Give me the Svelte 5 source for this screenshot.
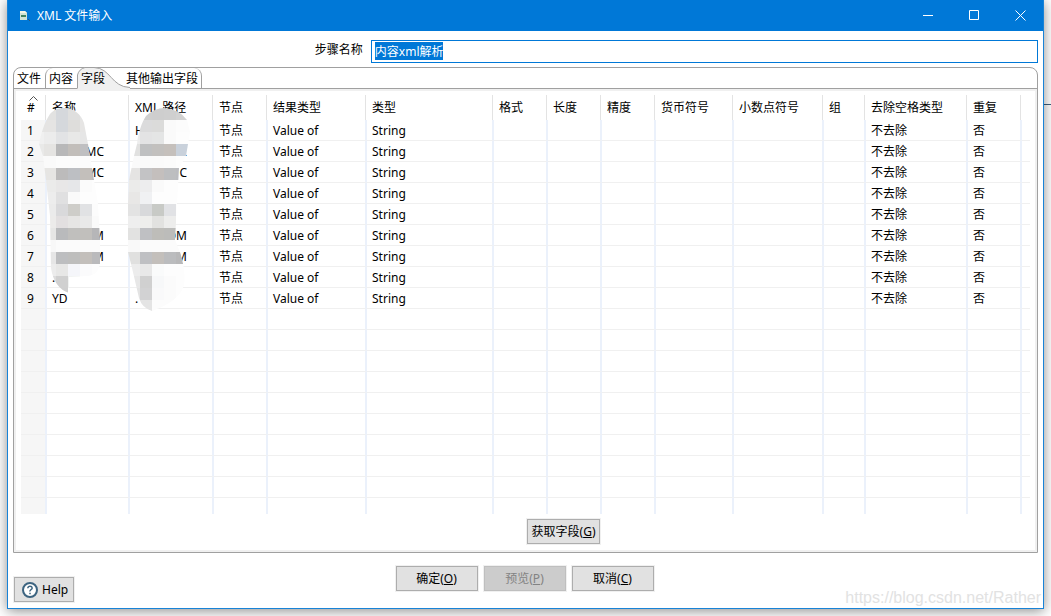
<script lang="ts">
  import { onMount } from 'svelte';

  interface Field {
    name?: string;
    nameTail?: string;
    path?: string;
    pathTail?: string;
  }

  interface Mosaic {
    id: string;
    x: number;
    outline: string;
    rows: string[];
  }

  const tabs = ['文件', '内容', '字段', '其他输出字段'];
  let activeTab = $state(2);

  let stepName = $state('内容xml解析');
  let nameInput: HTMLInputElement;

  const columns = [
    { label: '#', width: 26 },
    { label: '名称', width: 83 },
    { label: 'XML 路径', width: 84 },
    { label: '节点', width: 54 },
    { label: '结果类型', width: 99 },
    { label: '类型', width: 127 },
    { label: '格式', width: 54 },
    { label: '长度', width: 54 },
    { label: '精度', width: 54 },
    { label: '货币符号', width: 78 },
    { label: '小数点符号', width: 90 },
    { label: '组', width: 42 },
    { label: '去除空格类型', width: 102 },
    { label: '重复', width: 54 },
  ];

  const fields: Field[] = [
    { path: 'H' },
    { nameTail: 'MC', pathTail: 'C' },
    { nameTail: 'MC', pathTail: 'C' },
    {},
    {},
    { nameTail: 'M', pathTail: 'OM' },
    { nameTail: 'M', pathTail: 'OM' },
    { name: '.' },
    { name: 'YD', path: '.' },
  ];

  const emptyRows = Array.from({ length: 10 }, (_, i) => i);
  const emptyCells = Array.from({ length: 13 }, (_, i) => i);

  // Censored areas: 12px tiles, one string of colours per tile row.
  const mosaics: Mosaic[] = [
    {
      id: 'censor-name',
      x: -1,
      outline:
        'M19 49 C21 39 24 28 30 19 C36 12 44 13 46 13 C54 14 61 19 64 28 L68 49 L74 85 L78 109 L80 145 L80 169 Q78 180 68 181 L49 182 V198 Q34 193 31 173 L30 121 L26 85 L23 61 Z',
      rows: [
        '#e4e4e3 #e2e2e1 #e2e2e1 #d5d8dc #dfdfde #e4e4e4 #e4e4e4',
        '#e6e6e5 #e5e5e4 #e5e4e3 #d5d8dc #dedddb #e6e5e4 #e4e5e6',
        '#f2f2f2 #f0f0f0 #ececec #e2e3e5 #e8e8e7 #e6e6e6 #fafafa',
        '#eeeeed #e9e9e8 #e5e4e2 #b8b8b9 #c2beba #bfbfc1 #b7b8bb',
        '#fafafa #fafafa #fafafa #fcfcfc #fcfcfc #fcfcfc #fcfcfc',
        '#f2f2f2 #eeeeed #e6e5e3 #bcbbbb #bdbfc3 #c3bfbb #b9bbc0',
        '#f0f0f0 #eeeeee #ebebea #e8e7e7 #e6e7e9 #fbfbfb #fdfdfd',
        '#f2f2f2 #eeeeee #ededed #e0e0e1 #fafafa #fdfdfd #fdfdfd',
        '#f2f2f2 #eeeeee #ebebeb #d9d9db #cecdc9 #e1e2e4 #fcfcfc',
        '#f2f2f2 #eeeeee #ecebea #e2dfe0 #e6e5e4 #e9e9e9 #fafafa',
        '#f2f2f2 #eeeeee #e6e6e5 #b9babc #c0bfbd #c1bfbc #b6b6b8',
        '#f8f8f8 #f8f8f8 #f8f8f8 #fbfbfb #fbfbfb #fbfbfb #fbfbfb',
        '#f2f2f2 #eeeeee #e6e6e6 #bdbec0 #bebebd #c3bfbb #bababc',
        '#eeeeee #eeeeee #ececec #e7e7e6 #f5f6fa #fbfbfc #fdfdfd',
        '#e8e8e8 #e0e0e0 #dcdcdc #d0d0d0 #f1f3f2 #fcfcfc #fdfdfd',
        '#d8d8d8 #d6d6d6 #d2d2d2 #cfcfcf #ffffff #ffffff #ffffff',
      ],
    },
    {
      id: 'censor-path',
      x: 83,
      outline:
        'M33 49 C34 38 38 27 42 21 Q51 13 60 13 Q75 14 83 25 L86 37 L82 61 L75 73 L73 109 L71 145 L76 157 Q82 176 80 190 Q76 206 48 216 Q38 213 35 203 L28 173 L24 157 L24 109 L25 85 L30 61 Z',
      rows: [
        '#e0e0e0 #e0e0e0 #d8d8d8 #cfcfcf #cecece #cfcfcf #d2d2d2 #d2d2d2',
        '#eeeeee #eeeeee #e4e4e4 #dbdbdc #dbdbda #fafafa #fcfcfc #fcfcfc',
        '#f2f2f2 #f2f2f2 #ededed #e3e3e4 #e4e5e5 #fafafa #fdfdfd #fdfdfd',
        '#eeeeee #e9e9e9 #e1e1e0 #bfc0c1 #c2c0be #c5c0bc #c9d1db #c9d1db',
        '#fafafa #fafafa #fafafa #fafafa #fafafa #fbfbfb #fdfdfd #fdfdfd',
        '#eeeeee #eeeeee #e5e4e3 #c3c3c5 #c4bfbd #bdbec0 #bbbcc0 #bbbcc0',
        '#f2f2f2 #e8e8e7 #ebebea #ededee #fafafa #fdfdfd #fdfdfd #fdfdfd',
        '#f2f2f2 #e3e3e2 #e8e7e6 #f0f1f3 #fdfdfd #fdfdfd #fdfdfd #fdfdfd',
        '#f2f2f2 #f0f0f0 #e3e3e3 #d8d9db #c8cac6 #e1e2e5 #fdfdfd #fdfdfd',
        '#f2f2f2 #f3f5f5 #eeeeee #eeeeec #e2e2e0 #ededec #fdfdfd #fdfdfd',
        '#f2f2f2 #e5e5e4 #e2e2e1 #bfc0c3 #bebdb9 #bcbcba #bcbcbc #bcbcbc',
        '#f8f8f8 #f6f6f6 #f9f9f9 #fbfbfb #fbfbfb #fbfbfb #fbfbfb #fbfbfb',
        '#f2f2f2 #e3e3e2 #e0e0df #bfc0c3 #c3bfbb #bbbcbe #b8b8b9 #b8b8b9',
        '#eeeeee #ececec #ececec #e8e8e8 #fafbfb #fdfdfd #fdfdfd #fdfdfd',
        '#eeeeee #ececec #e7e7e7 #d0d0d0 #f7f8f9 #fbfbfb #fdfdfd #fdfdfd',
        '#eeeeee #e4e4e4 #e3e3e3 #d2d2d3 #f9f9fa #fbfbfb #fdfdfd #fdfdfd',
        '#eeeeee #e4e4e4 #e2e2e2 #e4e4e4 #fcfcfc #fcfcfc #fcfcfc #fcfcfc',
      ],
    },
  ];

  onMount(() => {
    nameInput.focus();
    nameInput.select();
  });
</script>

<svelte:head>
  <title>XML 文件输入</title>
</svelte:head>

<div class="desktop">
  <div class="window">
    <header class="titlebar">
      <svg class="app-icon" width="12" height="12" viewBox="0 0 12 12" aria-hidden="true">
        <path d="M1 1h5l2 2v7H1z" fill="#cfe3d6" />
        <path d="M1 1h5l2 2H1z" fill="#f4f6e4" />
        <path d="M2 5h5v2H2z" fill="#41835f" />
        <path d="M9 9l2 2" stroke="#24587e" />
      </svg>
      <h1>XML 文件输入</h1>
      <button type="button" class="win-btn" aria-label="最小化">
        <svg width="11" height="11" viewBox="0 0 11 11"><path d="M0 5.500h10" /></svg>
      </button>
      <button type="button" class="win-btn" aria-label="最大化">
        <svg width="11" height="11" viewBox="0 0 11 11"><path d="M.5.5h9v9h-9z" /></svg>
      </button>
      <button type="button" class="win-btn" aria-label="关闭">
        <svg width="11" height="11" viewBox="0 0 11 11"><path d="M.5.5l10 10M10.500.5l-10 10" /></svg>
      </button>
    </header>

    <main>
      <div class="step-row">
        <label for="step-name">步骤名称</label>
        <input id="step-name" type="text" bind:value={stepName} bind:this={nameInput} />
      </div>

      <section class="folder">
        <div class="tabs" role="tablist">
          {#each tabs as tab, i (tab)}
            <button
              type="button"
              role="tab"
              class="tab"
              class:active={i === activeTab}
              class:last={i === tabs.length - 1}
              aria-selected={i === activeTab}
              onclick={() => (activeTab = i)}
            >
              {#if i === activeTab}
                <svg class="tab-shape" width="56" height="22" viewBox="0 0 56 22" aria-hidden="true">
                  <path d="M.5 22V8Q2 2 8 .5H17C34 1 34 20 53 20.500V22z" fill="#f0f0f0" />
                  <path d="M.5 21V8Q2 2 8 .5H17C34 1 34 20 53 20.500" fill="none" stroke="#a0a0a0" />
                </svg>
              {/if}
              <span>{tab}</span>
            </button>
          {/each}
        </div>

        <div class="pane">
          <div class="grid-wrap">
            <table>
              <colgroup>
                {#each columns as col (col.label)}
                  <col style="width: {col.width}px" />
                {/each}
                <col />
              </colgroup>
              <thead>
                <tr>
                  {#each columns as col, i (col.label)}
                    <th scope="col" class:num={i === 0}>
                      {#if i === 0}
                        <svg class="sort" width="9" height="5" viewBox="0 0 9 5" aria-hidden="true">
                          <path d="M.5 4.500l4-4 4 4" fill="none" stroke="#555" />
                        </svg>
                      {/if}
                      {col.label}
                    </th>
                  {/each}
                  <td class="rest"></td>
                </tr>
              </thead>
              <tbody>
                {#each fields as field, i (i)}
                  <tr>
                    <td class="num">{i + 1}</td>
                    <td>
                      {#if field.nameTail}<span class="tail">{field.nameTail}</span>{:else}{field.name ?? ''}{/if}
                    </td>
                    <td>
                      {#if field.pathTail}<span class="tail">{field.pathTail}</span>{:else}{field.path ?? ''}{/if}
                    </td>
                    <td>节点</td>
                    <td>Value of</td>
                    <td>String</td>
                    <td></td>
                    <td></td>
                    <td></td>
                    <td></td>
                    <td></td>
                    <td></td>
                    <td>不去除</td>
                    <td>否</td>
                    <td class="rest"></td>
                  </tr>
                {/each}
                {#each emptyRows as row (row)}
                  <tr class:cut={row === emptyRows.length - 1}>
                    <td class="num"></td>
                    {#each emptyCells as cell (cell)}
                      <td></td>
                    {/each}
                    <td class="rest"></td>
                  </tr>
                {/each}
              </tbody>
            </table>

            <svg class="censor" width="200" height="240" viewBox="0 0 200 240" aria-hidden="true">
              {#each mosaics as m (m.id)}
                <clipPath id={m.id}>
                  <path d={m.outline} transform="translate({m.x} 0)" />
                </clipPath>
                <g clip-path="url(#{m.id})" shape-rendering="crispEdges">
                  {#each m.rows as row, r (r)}
                    {#each row.split(' ') as fill, c (c)}
                      <rect x={m.x + c * 12} y={r * 12 + 13} width="12" height="12" {fill} />
                    {/each}
                  {/each}
                </g>
              {/each}
            </svg>
          </div>

          <div class="pane-actions">
            <button type="button" class="btn">获取字段(<u>G</u>)</button>
          </div>
        </div>
      </section>

      <footer>
        <button type="button" class="btn help">
          <svg width="18" height="18" viewBox="0 0 18 18" aria-hidden="true">
            <circle cx="9" cy="9" r="7" fill="#fff" stroke="#3d6480" stroke-width="2" />
            <path d="M6.800 7.200Q7 5.200 9 5.200T11.200 7Q11.200 8 10 8.700T9 10.500M9 11.800V13.200" fill="none" stroke="#3d6480" stroke-width="1.500" />
          </svg>
          Help
        </button>
        <div class="actions">
          <button type="button" class="btn">确定(<u>O</u>)</button>
          <button type="button" class="btn" disabled>预览(<u>P</u>)</button>
          <button type="button" class="btn">取消(<u>C</u>)</button>
        </div>
      </footer>
    </main>

    <div class="watermark">https://blog.csdn.net/Rather</div>
  </div>
</div>

<style>
  :global(body) {
    margin: 0;
    background: #fff;
  }

  .desktop {
    padding: 0 7px 7px;
    overflow: hidden;
    background: linear-gradient(#3c5f7c, #3c5f7c) right 104px / 8px 1px no-repeat;
    font-family: 'Noto Sans', 'Noto Sans CJK SC', sans-serif;
    font-size: 12px;
    line-height: 16px;
    color: #000;
  }

  .window {
    position: relative;
    border: 1px solid #1883d7;
    border-top: 0;
    background: #fff;
    box-shadow: 0 2px 12px rgba(0, 0, 0, 0.45);
  }

  button,
  input {
    font: inherit;
    color: inherit;
  }

  /* Title bar */
  .titlebar {
    display: flex;
    align-items: center;
    height: 31px;
    padding-left: 11px;
    background: #0078d7;
    color: #fff;
  }
  h1 {
    flex: 1;
    margin: 0 0 0 6px;
    font-size: 12px;
    font-weight: 400;
  }
  .win-btn {
    display: flex;
    align-items: center;
    justify-content: center;
    width: 46px;
    height: 31px;
    padding: 0;
    border: 0;
    background: none;
  }
  .win-btn path {
    fill: none;
    stroke: #fff;
  }

  main {
    padding: 9px 5px 6px;
  }

  .step-row {
    display: flex;
    align-items: center;
    gap: 8px;
    padding-left: 2px;
  }
  .step-row label {
    width: 34%;
    padding-bottom: 4px;
    text-align: right;
  }
  .step-row input {
    flex: 1;
    min-width: 0;
    height: 23px;
    box-sizing: border-box;
    padding: 0 3px 2px;
    border: 1px solid #0078d7;
    outline: 0;
    background: #fff;
  }
  .step-row input::selection {
    background: #0078d7;
    color: #fff;
  }

  /* Tab folder */
  .folder {
    margin-top: 4px;
    border: 1px solid #a0a0a0;
    border-radius: 8px 8px 0 0;
  }
  .tabs {
    display: flex;
    height: 20px;
    border-bottom: 1px solid #a0a0a0;
  }
  .tab {
    position: relative;
    height: 20px;
    padding: 2px 4px 0 3px;
    border: 0;
    border-left: 1px solid #a0a0a0;
    border-radius: 8px 0 0 0;
    background: none;
    white-space: nowrap;
  }
  .tab:first-child {
    border-left: 0;
  }
  .tab.active {
    padding-right: 18px;
    border-left-color: transparent;
  }
  .tab.last {
    padding-right: 3px;
    border-left: 0;
    border-right: 1px solid #a0a0a0;
    border-radius: 0 8px 0 0;
  }
  .tab span {
    position: relative;
  }
  .tab-shape {
    position: absolute;
    top: -1px;
    left: -1px;
  }

  .pane {
    padding: 4px 5px 6px;
    border: 2px solid #f0f0f0;
  }

  /* Field table */
  .grid-wrap {
    position: relative;
  }
  table {
    width: 100%;
    table-layout: fixed;
    border-collapse: separate;
    border-spacing: 0;
  }
  th,
  td {
    box-sizing: border-box;
    height: 21px;
    padding: 2px 0 0 5px;
    border-right: 2px solid #ebf1fb;
    border-bottom: 1px solid #f0f0f0;
    font-weight: 400;
    text-align: left;
    white-space: nowrap;
  }
  th {
    position: relative;
    height: 25px;
    padding-top: 0;
    border-right: 1px solid #fff;
    border-bottom: 0;
    box-shadow: inset -1px 0 #e3e3e3;
  }
  tbody .num {
    background: #f6f6f6;
  }
  .num {
    padding-left: 6px;
  }
  .rest {
    border-right: 0;
  }
  thead .rest {
    border-bottom: 0;
  }
  .cut td {
    height: 16px;
    border-bottom: 0;
  }
  .sort {
    position: absolute;
    top: 1px;
    left: 8px;
  }
  .tail {
    display: inline-block;
    width: 52px;
    text-align: right;
  }
  .censor {
    position: absolute;
    top: 0;
    left: 0;
  }

  /* Buttons */
  .btn {
    height: 25px;
    padding: 0 4px;
    border: 1px solid #adadad;
    background: #e1e1e1;
    outline: 1px solid #f0f0f0;
    white-space: nowrap;
  }
  .btn:disabled {
    border-color: #bfbfbf;
    background: #ccc;
    color: #838383;
  }
  .pane-actions {
    display: flex;
    justify-content: center;
    padding: 5px 0 0 76px;
  }

  footer {
    display: grid;
    grid-template-columns: 1fr auto 1fr;
    padding: 13px 3px 0 1px;
  }
  .actions {
    display: flex;
    gap: 6px;
    height: 36px;
  }
  .actions .btn {
    width: 82px;
  }
  .help {
    display: flex;
    align-items: center;
    align-self: end;
    justify-self: start;
    gap: 3px;
    padding: 0 5px 0 6px;
  }

  .watermark {
    position: absolute;
    right: 2px;
    bottom: 0;
    font-family: 'Liberation Sans', Arial, sans-serif;
    font-size: 16px;
    line-height: 20px;
    color: #e2e2e2;
    pointer-events: none;
  }
</style>
